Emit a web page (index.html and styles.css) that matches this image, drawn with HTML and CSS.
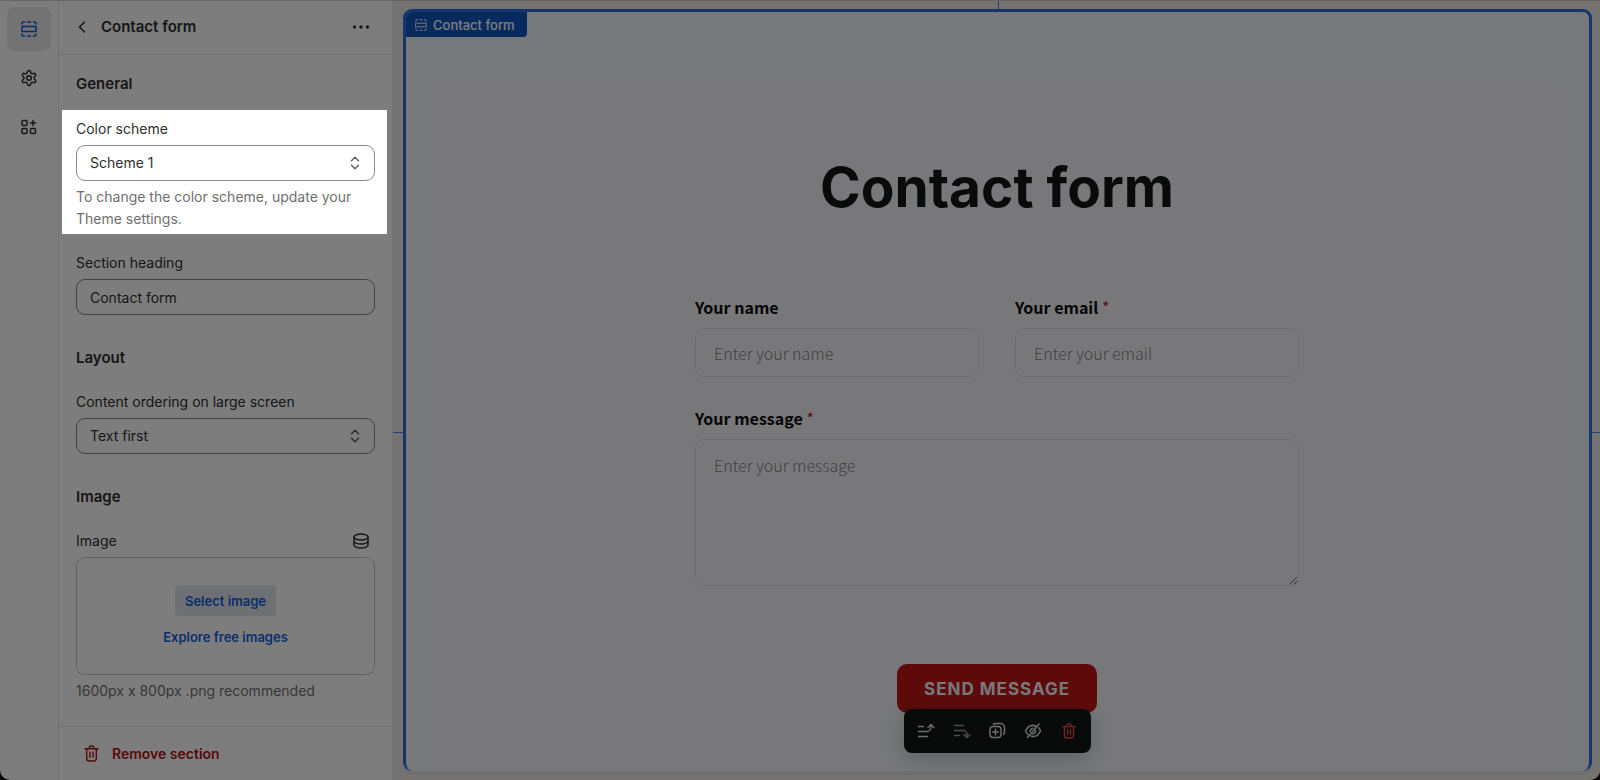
FILE: index.html
```html
<!DOCTYPE html>
<html lang="en">
<head>
<meta charset="utf-8">
<meta name="viewport" content="width=device-width, initial-scale=1">
<title>Theme editor – Contact form</title>
<link rel="stylesheet" href="styles.css">
</head>
<body>
<svg class="sprite" aria-hidden="true">
  <symbol id="i-section" viewBox="0 0 16 16"><path d="M1 3V2.300Q1 1 2.300 1H3.500M6.500 1h3M12.500 1h1.200Q15 1 15 2.300V3M1 13v.7Q1 15 2.300 15h1.200M6.500 15h3M12.500 15h1.200q1.300 0 1.300-1.300V13M1 5.600h14v4.800H1z"/></symbol>
  <symbol id="i-trash" viewBox="0 0 16 18"><path d="M1 4h14M5.500 4V3a2 2 0 0 1 2-2h1a2 2 0 0 1 2 2v1M2.800 4v10a3 3 0 0 0 3 3h4.400a3 3 0 0 0 3-3V4M6.300 7.500v5.500M9.700 7.500v5.500"/></symbol>
  <symbol id="i-updown" viewBox="0 0 10 14"><path d="M1.500 4.700 5 1.200l3.500 3.500M1.500 9.300 5 12.800l3.500-3.500"/></symbol>
</svg>
<div class="app">
  <nav class="rail" aria-label="Editor">
    <button class="rail-button active" aria-label="Sections"><svg class="icon s16"><use href="#i-section"/></svg></button>
    <button class="rail-button" aria-label="Theme settings"><svg class="icon s18" viewBox="0 0 24 24"><path d="M12.200 2h-.4a2 2 0 0 0-2 2v.200a2 2 0 0 1-1 1.700l-.4.300a2 2 0 0 1-2 0l-.2-.1a2 2 0 0 0-2.700.7l-.2.400a2 2 0 0 0 .7 2.700l.2.100a2 2 0 0 1 1 1.700v.500a2 2 0 0 1-1 1.800l-.2.100a2 2 0 0 0-.7 2.700l.2.400a2 2 0 0 0 2.700.7l.2-.1a2 2 0 0 1 2 0l.4.300a2 2 0 0 1 1 1.700v.200a2 2 0 0 0 2 2h.4a2 2 0 0 0 2-2v-.2a2 2 0 0 1 1-1.700l.4-.3a2 2 0 0 1 2 0l.2.100a2 2 0 0 0 2.700-.7l.2-.4a2 2 0 0 0-.7-2.700l-.2-.1a2 2 0 0 1-1-1.700v-.5a2 2 0 0 1 1-1.800l.2-.1a2 2 0 0 0 .7-2.700l-.2-.4a2 2 0 0 0-2.700-.7l-.2.100a2 2 0 0 1-2 0l-.4-.3a2 2 0 0 1-1-1.700V4a2 2 0 0 0-2-2z"/><circle cx="12" cy="12" r="3"/></svg></button>
    <button class="rail-button" aria-label="App embeds"><svg class="icon s16" viewBox="0 0 16 16"><rect x="1" y="1.500" width="5" height="5" rx="1"/><rect x="1" y="9.500" width="5" height="5" rx="1"/><rect x="9.500" y="9.500" width="5" height="5" rx="1"/><path d="M12 1.500v5M9.500 4h5"/></svg></button>
  </nav>

  <aside class="sidebar">
    <header class="sidebar-header">
      <button class="plain" aria-label="Back"><svg class="icon back" viewBox="0 0 8 12"><path d="M6.500 1 1.500 6l5 5"/></svg></button>
      <h1 class="sidebar-title">Contact form</h1>
      <button class="plain" aria-label="More actions"><svg class="more" viewBox="0 0 18 4"><circle cx="2.500" cy="2" r="1.700"/><circle cx="9" cy="2" r="1.700"/><circle cx="15.500" cy="2" r="1.700"/></svg></button>
    </header>

    <div class="settings">
      <h2 class="group-title">General</h2>
      <div class="field spotlight">
        <label for="scheme">Color scheme</label>
        <div class="select">
          <select id="scheme" class="control"><option>Scheme 1</option></select>
          <svg class="icon updown"><use href="#i-updown"/></svg>
        </div>
        <p class="help">To change the color scheme, update your Theme settings.</p>
      </div>
      <div class="field heading-field">
        <label for="heading">Section heading</label>
        <input id="heading" class="control" type="text" value="Contact form">
      </div>

      <h2 class="group-title">Layout</h2>
      <div class="field">
        <label for="order">Content ordering on large screen</label>
        <div class="select">
          <select id="order" class="control"><option>Text first</option></select>
          <svg class="icon updown"><use href="#i-updown"/></svg>
        </div>
      </div>

      <h2 class="group-title">Image</h2>
      <div class="field">
        <div class="label-row">
          <span>Image</span>
          <button class="plain" aria-label="Connect dynamic source"><svg class="icon s16" viewBox="0 0 16 16"><ellipse cx="8" cy="4" rx="7" ry="3"/><path d="M1 4v8c0 1.600 3.100 3 7 3s7-1.400 7-3V4M1 8c0 1.600 3.100 3 7 3s7-1.400 7-3"/></svg></button>
        </div>
        <div class="dropzone">
          <button class="select-image">Select image</button>
          <a class="explore" href="#">Explore free images</a>
        </div>
        <p class="help">1600px x 800px .png recommended</p>
      </div>
    </div>

    <footer class="sidebar-footer">
      <button class="remove"><svg class="icon trash"><use href="#i-trash"/></svg>Remove section</button>
    </footer>
  </aside>

  <main class="stage">
    <span class="guide guide-top"></span>
    <span class="guide guide-left"></span>
    <span class="guide guide-right"></span>
    <section class="preview">
      <div class="tag"><svg class="icon s12"><use href="#i-section"/></svg>Contact form</div>
      <div class="card">
        <h2 class="card-title">Contact form</h2>
        <form class="form">
          <div class="form-field">
            <label for="name">Your name</label>
            <input id="name" type="text" placeholder="Enter your name">
          </div>
          <div class="form-field">
            <label for="email">Your email <span class="required">*</span></label>
            <input id="email" type="email" placeholder="Enter your email">
          </div>
          <div class="form-field wide">
            <label for="message">Your message <span class="required">*</span></label>
            <textarea id="message" placeholder="Enter your message"></textarea>
          </div>
          <div class="submit-row wide">
            <button class="send" type="submit">SEND MESSAGE</button>
            <div class="toolbar">
              <button type="button" aria-label="Move up"><svg class="icon tool" viewBox="0 0 18 18"><path d="M1.500 4.500h5M1.500 9.500h8.500a4 4 0 0 0 4-4V3M11 5.500l3-3 3 3M1.500 14.500h9"/></svg></button>
              <button type="button" class="faded" aria-label="Move down"><svg class="icon tool" viewBox="0 0 18 18"><path d="M1.500 3.500h9M1.500 8.500h8.500a4 4 0 0 1 4 4V15M11 12.500l3 3 3-3M1.500 13.500h5"/></svg></button>
              <button type="button" aria-label="Duplicate"><svg class="icon tool" viewBox="0 0 18 18"><rect x="2" y="4.500" width="11" height="11" rx="3"/><path d="M5.500 2.500Q6.200 1.500 7.500 1.500h5a4 4 0 0 1 4 4v4.500q0 1.500-1 2.300M7.500 7.200v5.600M4.700 10h5.600"/></svg></button>
              <button type="button" aria-label="Hide"><svg class="icon tool" viewBox="0 0 18 18"><path d="M15 2 3.500 15.500M12 4.200C7 2 3.500 5 1.500 9c.6 1.400 1.400 2.500 2.500 3.500M14.700 5.800c.8.900 1.400 2 1.800 3.200-2 4-5.500 6.500-9.500 5M11.500 8.500a2.800 2.800 0 0 1-2.700 3.200M6.300 9.500a2.800 2.800 0 0 1 2.500-3.200"/></svg></button>
              <button type="button" class="danger" aria-label="Remove"><svg class="icon tool-trash"><use href="#i-trash"/></svg></button>
            </div>
          </div>
        </form>
      </div>
    </section>
  </main>
</div>
</body>
</html>
```
FILE: styles.css
```css
* { box-sizing: border-box; }

body {
  margin: 0;
  background: #181010;
  color: #303030;
  font: 14px/20px Inter, "Liberation Sans", sans-serif;
}

h1, h2, p { margin: 0; }
button, input, select, textarea { font: inherit; color: inherit; }
button { cursor: pointer; }

.sprite { display: none; }

.icon {
  display: block;
  fill: none;
  stroke: currentColor;
  stroke-width: 1.5;
  stroke-linecap: round;
  stroke-linejoin: round;
}
.s12 { width: 12px; height: 12px; stroke-width: 1.3; }
.s16 { width: 16px; height: 16px; }
.s18 { width: 18px; height: 18px; stroke-width: 2; }
.back { width: 8px; height: 12px; }
.updown { width: 10px; height: 14px; }
.trash { width: 15px; height: 17px; }
.more { display: block; width: 18px; height: 4px; fill: currentColor; }

.app {
  display: flex;
  min-height: 100vh;
  border-top: 1px solid #d0d0d0;
  border-radius: 0 0 10px 10px;
  background: #fff;
}

/* Icon rail */
.rail {
  display: flex;
  flex-direction: column;
  gap: 5px;
  width: 59px;
  padding: 6px 7px;
  border-right: 1px solid #ebebeb;
}
.rail-button {
  display: grid;
  place-items: center;
  width: 44px;
  height: 44px;
  padding: 0;
  border: 0;
  border-radius: 8px;
  background: none;
}
.rail-button.active { background: #ebebeb; color: #0f5ce0; }

/* Sidebar */
.sidebar {
  display: flex;
  flex-direction: column;
  width: 334px;
  border-right: 1px solid #ebebeb;
}
.sidebar-header {
  display: flex;
  align-items: center;
  gap: 15px;
  height: 54px;
  padding: 0 22px 2px 19px;
  border-bottom: 1px solid #e3e3e3;
}
.sidebar-title {
  flex: 1;
  font-size: 15px;
  font-weight: 600;
}
.plain { padding: 0; border: 0; background: none; }

.settings { flex: 1; padding: 19px 17px 24px; }
.group-title {
  margin: 33px 0 24px;
  font-size: 15px;
  font-weight: 600;
}
.group-title:first-child { margin: 0 0 16px; }

.field label, .label-row {
  display: flex;
  justify-content: space-between;
  align-items: center;
  margin-bottom: 6px;
}
.label-row { padding-right: 6px; }

.control {
  display: block;
  width: 100%;
  height: 36px;
  padding: 0 13px;
  border: 1px solid #8a8a8a;
  border-radius: 9px;
  background: #fff;
  appearance: none;
}
.select { display: grid; align-items: center; }
.select > * { grid-area: 1 / 1; }
.select .icon {
  justify-self: end;
  margin-right: 15px;
  color: #616161;
  pointer-events: none;
}
.help { margin-top: 5px; color: #707070; line-height: 22px; }

/* The highlighted setting dims everything around it */
.spotlight {
  position: relative;
  z-index: 10;
  margin: 0 -12px 0 -14px;
  padding: 9px 12px 4px 14px;
  background: #fff;
  box-shadow: 0 0 0 100vmax rgba(0, 0, 0, .51);
}
.heading-field { margin-top: 19px; }

.dropzone {
  display: flex;
  flex-direction: column;
  align-items: center;
  gap: 11px;
  padding: 27px 0;
  border: 1px dotted #8a8a8a;
  border-radius: 9px;
}
.select-image {
  height: 31px;
  padding: 0 10px;
  border: 0;
  border-radius: 4px;
  background: #e0e4ea;
}
.select-image, .explore { color: #1260dc; font-weight: 600; font-size: 13px; text-decoration: none; }

.sidebar-footer {
  display: flex;
  align-items: center;
  height: 54px;
  padding: 0 25px;
  border-top: 1px solid #e3e3e3;
}
.remove {
  display: flex;
  align-items: center;
  gap: 13px;
  padding: 0;
  border: 0;
  background: none;
  color: #b01414;
  font-weight: 600;
}

/* Preview */
.stage {
  position: relative;
  display: flex;
  flex: 1;
  padding: 8px 8px 9px 10px;
  border-radius: 0 0 10px 0;
  background: #edebe8;
}
.guide { position: absolute; background: #4f88ea; }
.guide-top { top: 0; left: calc(50% + 1px); width: 1px; height: 8px; }
.guide-left { top: 431px; left: 0; width: 10px; height: 1px; }
.guide-right { top: 431px; right: 0; width: 8px; height: 1px; }

.preview {
  display: flex;
  flex: 1;
  flex-direction: column;
  align-items: flex-start;
  overflow: hidden;
  border: 3px solid #2a6fdc;
  border-bottom: 0;
  border-radius: 9px;
  background: #f3f4f6;
  box-shadow: 0 4px 0 #dfe1e4;
}
.tag {
  display: flex;
  align-items: center;
  gap: 6px;
  height: 25px;
  padding: 0 12px 0 9px;
  border-radius: 0 0 4px 0;
  background: #1457c0;
  color: #fff;
  font-size: 13px;
  font-weight: 500;
}
.card {
  flex: 1;
  align-self: stretch;
  margin: 43px 32px 0 31px;
  padding: 75px 24px 0;
  border-radius: 12px 12px 0 0;
  background: #f4f5fa;
  color: #121716;
  text-align: center;
}
.card-title { font-size: 55px; line-height: 64px; font-weight: 700; }

.form {
  display: grid;
  grid-template-columns: 1fr 1fr;
  gap: 29px 36px;
  max-width: 604px;
  margin: 76px auto 0;
  font: 16px/24px "Noto Sans CJK SC", "Noto Sans", sans-serif;
  text-align: left;
}
.form-field { display: flex; flex-direction: column; gap: 9px; }
.form-field label { font-weight: 700; color: #0a0a0a; }
.required { color: #c01818; font-weight: 400; }
.form-field input, .form-field textarea {
  display: block;
  width: 100%;
  height: 49px;
  padding: 0 18px;
  border: 1px solid #e3e3e5;
  border-radius: 9px;
  background: transparent;
}
.form-field textarea { height: 147px; padding-top: 13px; }
.form-field ::placeholder { color: #86868a; font-weight: 300; opacity: 1; }
.wide { grid-column: 1 / -1; }

.submit-row {
  position: relative;
  display: flex;
  justify-content: center;
  margin-top: 49px;
}
.send {
  width: 200px;
  height: 49px;
  padding: 0;
  border: 0;
  border-radius: 10px;
  background: #bf1616;
  color: #f4f5fa;
  font: 700 17px/24px Inter, "Liberation Sans", sans-serif;
  letter-spacing: 1px;
}
.toolbar {
  position: absolute;
  top: 45px;
  left: 50%;
  display: flex;
  justify-content: space-around;
  align-items: center;
  width: 187px;
  height: 44px;
  margin-left: -93px;
  padding: 0 4px;
  border-radius: 8px;
  background: #141716;
  box-shadow: 0 6px 24px rgba(0, 0, 0, .2);
}
.toolbar button {
  display: grid;
  place-items: center;
  width: 32px;
  height: 32px;
  padding: 0;
  border: 0;
  background: none;
  color: #dcdcdc;
}
.toolbar .faded { color: #9a9a9a; }
.toolbar .danger { color: #ee4a4a; }
.tool { width: 18px; height: 18px; }
.tool-trash { width: 14px; height: 16px; }
```
